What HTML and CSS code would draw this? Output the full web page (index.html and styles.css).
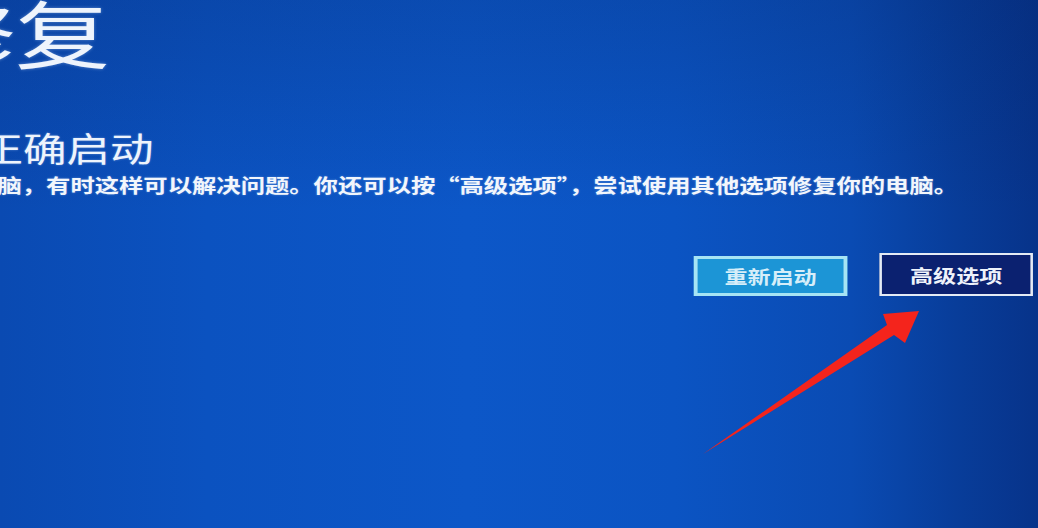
FILE: index.html
```html
<!DOCTYPE html>
<html lang="zh-CN">
<head>
<meta charset="utf-8">
<title>自动修复</title>
<link rel="stylesheet" href="styles.css">
</head>
<body>
<main class="screen">
  <div class="content">
    <h1 class="title">自动修复</h1>
    <h2 class="subtitle">你的电脑未正确启动</h2>
    <p class="desc">按“重新启动”以重启你的电脑，有时这样可以解决问题。你还可以按“高级选项”，尝试使用其他选项修复你的电脑。</p>
    <div class="actions">
      <button class="btn btn-restart">重新启动</button>
      <button class="btn btn-advanced">高级选项</button>
    </div>
  </div>
  <svg class="arrow" width="1038" height="528" viewBox="0 0 1038 528" aria-hidden="true">
    <polygon points="703,454 887,325 883,314 919,311 905,343 894,335" fill="#f4241c"/>
  </svg>
</main>
</body>
</html>
```
FILE: styles.css
```css
html, body {
  margin: 0;
  padding: 0;
}
body {
  width: 1038px;
  height: 528px;
  overflow: hidden;
  font-family: "Noto Sans CJK SC", "Microsoft YaHei", sans-serif;
  color: #eef3fb;
  background:
    linear-gradient(to bottom, rgba(4, 30, 90, 0.2) 0%, rgba(4, 30, 90, 0) 40%, rgba(4, 30, 90, 0) 100%),
    linear-gradient(to right, #0a4ab2 0%, #0b52c0 20%, #0c57c8 45%, #0b54c3 65%, #0a4bb3 82%, #083d9a 92%, #07338a 100%);
}
.screen {
  position: relative;
  width: 1038px;
  height: 528px;
  overflow: hidden;
}
.content {
  width: 811px;
  transform: scaleX(1.28);
  transform-origin: 0 0;
}
.title {
  margin: -6px 0 0 -210px;
  font-size: 74px;
  line-height: 1;
  font-weight: 400;
  white-space: nowrap;
  color: #eef4fc;
  text-shadow: 0 0 3px rgba(200, 225, 255, 0.45);
}
.subtitle {
  margin: 63px 0 0 -186px;
  font-size: 34px;
  line-height: 1;
  font-weight: 400;
  white-space: nowrap;
  color: #eef4fc;
  text-shadow: 0 0 2px rgba(200, 225, 255, 0.45);
}
.desc {
  margin: 10px 0 0 -249px;
  font-size: 19px;
  line-height: 1;
  font-weight: 700;
  white-space: nowrap;
  color: #f2f6fc;
  text-shadow: 0 0 2px rgba(200, 225, 255, 0.4);
}
.actions {
  display: flex;
  justify-content: flex-end;
  align-items: flex-end;
  gap: 25px;
  margin-top: 59px;
  padding-right: 4px;
}
.btn {
  width: 120px;
  box-sizing: border-box;
  font-family: inherit;
  font-size: 18px;
  line-height: 1;
  font-weight: 700;
  padding: 0;
  margin: 0;
  cursor: pointer;
}
.btn-restart {
  height: 40px;
  background: #1c95d6;
  border: 3px solid #a6e4f4;
  color: #d6eef9;
}
.btn-advanced {
  height: 43px;
  background: #0b2170;
  border: 2px solid #e4ebf5;
  color: #eef2fa;
}
.arrow {
  position: absolute;
  left: 0;
  top: 0;
  pointer-events: none;
}
```
